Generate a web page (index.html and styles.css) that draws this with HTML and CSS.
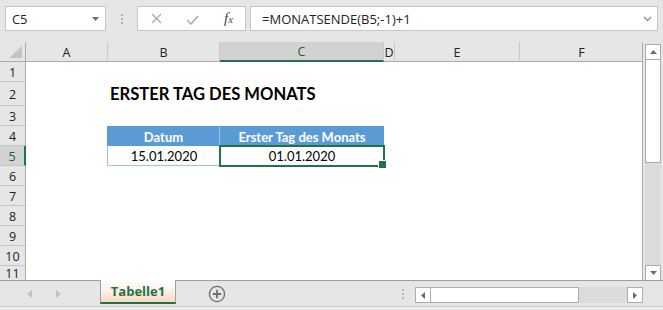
FILE: index.html
```html
<!DOCTYPE html>
<html>
<head>
<meta charset="utf-8">
<link rel="stylesheet" href="styles.css">
</head>
<body>
<div class="app">
  <div class="toolbar">
    <div class="namebox">
      <span class="nb-text">C5</span>
      <svg class="nb-caret" width="7" height="4" viewBox="0 0 7 4"><path d="M0 0h7L3.5 4z" fill="#6d6d6d"/></svg>
    </div>
    <div class="grip"><i></i><i></i><i></i></div>
    <div class="fxbox">
      <svg class="fx-x" width="11" height="11" viewBox="0 0 11 11"><path d="M1 1l9 9M10 1l-9 9" stroke="#a9a9a9" stroke-width="1.3"/></svg>
      <svg class="fx-check" width="13" height="10" viewBox="0 0 13 10"><path d="M1 5l4 4 7-8" stroke="#a9a9a9" stroke-width="1.5" fill="none"/></svg>
      <span class="fx-label">f<span class="fx-sub">x</span></span>
    </div>
    <div class="formula">
      <span class="formula-text">=MONATSENDE(B5;-1)+1</span>
      <svg class="formula-chev" width="9" height="6" viewBox="0 0 9 6"><path d="M1 1l3.5 3.5L8 1" stroke="#8f8f8f" stroke-width="1.4" fill="none"/></svg>
    </div>
  </div>

  <div class="main">
    <div class="grid">
      <div class="corner"><svg width="13" height="12" viewBox="0 0 13 12"><path d="M13 0V12H0z" fill="#c4c4c4"/></svg></div>
      <div class="colhead">A</div>
      <div class="colhead">B</div>
      <div class="colhead sel">C</div>
      <div class="colhead">D</div>
      <div class="colhead">E</div>
      <div class="colhead last">F</div>

      <div class="rowhead r1">1</div>
      <div class="rowhead r2">2</div>
      <div class="rowhead r3">3</div>
      <div class="rowhead r4">4</div>
      <div class="rowhead r5 sel">5</div>
      <div class="rowhead r6">6</div>
      <div class="rowhead r7">7</div>
      <div class="rowhead r8">8</div>
      <div class="rowhead r9">9</div>
      <div class="rowhead r10">10</div>
      <div class="rowhead r11">11</div>

      <div class="title">ERSTER TAG DES MONATS</div>
      <div class="th th-b">Datum</div>
      <div class="th th-c">Erster Tag des Monats</div>
      <div class="td td-b">15.01.2020</div>
      <div class="td td-c">01.01.2020</div>
    </div>
    <div class="vscroll">
      <div class="sbtn"><svg width="7" height="4" viewBox="0 0 7 4"><path d="M0 4h7L3.5 0z" fill="#6b6b6b"/></svg></div>
      <div class="vthumb"></div>
      <div class="vtrack"></div>
      <div class="sbtn"><svg width="7" height="4" viewBox="0 0 7 4"><path d="M0 0h7L3.5 4z" fill="#6b6b6b"/></svg></div>
    </div>
  </div>

  <div class="tabbar">
    <div class="nav">
      <svg width="5" height="8" viewBox="0 0 5 8"><path d="M5 0v8L0 4z" fill="#c3c3c3"/></svg>
      <svg width="5" height="8" viewBox="0 0 5 8"><path d="M0 0v8l5-4z" fill="#c3c3c3"/></svg>
    </div>
    <div class="tab">Tabelle1</div>
    <div class="addsheet">
      <svg width="18" height="18" viewBox="0 0 18 18"><circle cx="9" cy="9" r="7.6" stroke="#707070" stroke-width="1.4" fill="none"/><path d="M9 4.8v8.4M4.8 9h8.4" stroke="#707070" stroke-width="1.8"/></svg>
    </div>
    <div class="spacer"></div>
    <div class="grip2"><i></i><i></i><i></i></div>
    <div class="hscroll">
      <div class="hbtn"><svg width="4" height="7" viewBox="0 0 4 7"><path d="M4 0v7L0 3.5z" fill="#6b6b6b"/></svg></div>
      <div class="hthumb"></div>
      <div class="htrack"></div>
      <div class="hbtn"><svg width="4" height="7" viewBox="0 0 4 7"><path d="M0 0v7l4-3.5z" fill="#6b6b6b"/></svg></div>
    </div>
  </div>
  <div class="status"></div>
</div>
</body>
</html>
```

FILE: styles.css
```css
* { box-sizing: border-box; }
html, body { margin: 0; padding: 0; }
body {
  width: 663px;
  height: 310px;
  overflow: hidden;
  background: #e6e6e6;
  font-family: "Open Sans", "Noto Sans", sans-serif;
}
.app { width: 663px; height: 310px; display: flex; flex-direction: column; }

/* toolbar */
.toolbar {
  height: 42px;
  display: flex;
  align-items: flex-start;
  padding: 6px 0 0 5px;
  flex: none;
}
.namebox {
  width: 101px;
  height: 25px;
  background: #fff;
  border: 1px solid #c6c6c6;
  display: flex;
  align-items: center;
  padding: 0 6px 0 6px;
  justify-content: space-between;
}
.nb-text { font-size: 13px; color: #222; letter-spacing: -0.2px; }
.nb-caret { margin-top: 1px; }
.grip {
  width: 31px;
  height: 25px;
  display: flex;
  flex-direction: column;
  align-items: center;
  justify-content: center;
  gap: 2px;
}
.grip i, .grip2 i { display: block; width: 2px; height: 2px; background: #b5b5b5; }
.fxbox {
  width: 109px;
  height: 25px;
  background: #fff;
  border: 1px solid #c6c6c6;
  display: flex;
  align-items: center;
  padding-left: 13px;
}
.fx-x { margin-right: 24px; }
.fx-check { margin-right: 25px; margin-top: 2px; }
.fx-label {
  font-family: "Liberation Serif", serif;
  font-style: italic;
  font-size: 15px;
  color: #4a4a4a;
  line-height: 1;
}
.fx-sub { font-size: 11px; }
.formula {
  width: 408px;
  height: 25px;
  margin-left: 4px;
  background: #fff;
  border: 1px solid #c6c6c6;
  display: flex;
  align-items: center;
  justify-content: space-between;
  padding: 0 5px 0 11px;
}
.formula-text { font-size: 13px; color: #222; }

/* main area */
.main { height: 238px; display: flex; flex: none; }
.grid {
  width: 643px;
  height: 238px;
  display: grid;
  grid-template-columns: 26px 82px 112px 164px 11px 125px 123px;
  grid-template-rows: 20px 20px 24px repeat(8, 20px) 14px;
  background: #fff;
  border-right: 1px solid #ababab;
  overflow: hidden;
}
.corner {
  background: #e6e6e6;
  border-right: 1px solid #ababab;
  border-bottom: 1px solid #ababab;
  display: flex;
  align-items: flex-end;
  justify-content: flex-end;
  padding: 0 3px 3px 0;
}
.corner svg { display: block; }
.colhead {
  background: #e6e6e6;
  border-right: 1px solid #c9c9c9;
  border-bottom: 1px solid #ababab;
  display: flex;
  align-items: center;
  justify-content: center;
  font-size: 12.5px;
  color: #222;
  padding-top: 1px;
}
.colhead.last { border-right: none; }
.colhead.sel {
  background: #d2d2d2;
  border-bottom: 2px solid #217346;
  color: #1d5f3b;
}
.rowhead {
  grid-column: 1;
  background: #e6e6e6;
  border-right: 1px solid #ababab;
  border-bottom: 1px solid #c5c5c5;
  display: flex;
  align-items: center;
  justify-content: center;
  font-size: 12.5px;
  color: #222;
  padding-top: 1px;
}
.rowhead.sel {
  background: #d2d2d2;
  border-right: 2px solid #217346;
  color: #1d5f3b;
}
.r1 { grid-row: 2; } .r2 { grid-row: 3; } .r3 { grid-row: 4; } .r4 { grid-row: 5; }
.r5 { grid-row: 6; } .r6 { grid-row: 7; } .r7 { grid-row: 8; } .r8 { grid-row: 9; }
.r9 { grid-row: 10; } .r10 { grid-row: 11; }
.r11 { grid-row: 12; align-items: flex-start; padding-top: 0; line-height: 16px; border-bottom: none; }

.title {
  grid-column: 3 / span 3;
  grid-row: 3;
  align-self: end;
  padding: 0 0 2px 2px;
  font-family: Lato, "Open Sans", sans-serif;
  font-weight: 700;
  font-size: 16.6px;
  white-space: nowrap;
  color: #000;
}
.th, .td {
  font-family: Lato, "Open Sans", sans-serif;
  font-size: 13px;
  display: flex;
  align-items: center;
  justify-content: center;
  white-space: nowrap;
  padding-top: 1px;
}
.th {
  grid-row: 5;
  background: #5b9bd5;
  color: #fff;
  font-weight: 700;
}
.th-b { grid-column: 3; border-right: 1px solid #9bc2e6; box-shadow: -1px 0 0 #5b9bd5; }
.th-c { grid-column: 4; }
.td {
  grid-row: 6;
  color: #000;
  border-bottom: 1px solid #9bc2e6;
}
.td-b { grid-column: 3; box-shadow: -1px 0 0 #9bc2e6; }
.td-c { grid-column: 4; position: relative; }
.td-c::after {
  content: "";
  position: absolute;
  left: -1px;
  right: -1px;
  top: -1px;
  bottom: -2px;
  border: 2px solid #217346;
}
.td-c::before {
  content: "";
  position: absolute;
  right: -3px;
  bottom: -4px;
  width: 7px;
  height: 7px;
  background: #217346;
  border: 1px solid #fff;
  z-index: 1;
}

/* vertical scroll */
.vscroll {
  width: 16px;
  margin: 2px 0 0 2px;
  height: 237px;
  display: flex;
  flex-direction: column;
  background: #dcdcdc;
}
.sbtn {
  height: 16px;
  background: #fff;
  border: 1px solid #ababab;
  display: flex;
  align-items: center;
  justify-content: center;
  flex: none;
}
.vthumb {
  height: 103px;
  background: #fff;
  border: 1px solid #ababab;
  border-top: none;
  flex: none;
}
.vtrack { flex: 1; }

/* tab bar */
.tabbar {
  height: 26px;
  border-top: 1px solid #9e9e9e;
  display: flex;
  align-items: flex-start;
  flex: none;
}
.nav {
  width: 100px;
  height: 25px;
  display: flex;
  align-items: center;
  padding-left: 27px;
  gap: 24px;
}
.tab {
  width: 76px;
  height: 24px;
  margin-top: -1px;
  border-left: 1px solid #9e9e9e;
  border-right: 1px solid #9e9e9e;
  border-bottom: 2px solid #217346;
  background: linear-gradient(#ffffff 0%, #fdf0e7 50%, #f8d9c4 100%);
  color: #217346;
  font-weight: 700;
  font-size: 13px;
  display: flex;
  align-items: center;
  justify-content: center;
  padding-bottom: 1px;
}
.addsheet {
  width: 82px;
  height: 25px;
  display: flex;
  align-items: center;
  justify-content: center;
  padding-right: 1px;
}
.spacer { flex: 1; }
.grip2 {
  width: 20px;
  height: 25px;
  display: flex;
  flex-direction: column;
  align-items: center;
  justify-content: center;
  gap: 2px;
  margin-right: 2px;
}
.hscroll {
  width: 228px;
  height: 16px;
  margin: 6px 20px 0 0;
  display: flex;
  background: #dcdcdc;
}
.hbtn {
  width: 16px;
  height: 16px;
  background: #fff;
  border: 1px solid #ababab;
  display: flex;
  align-items: center;
  justify-content: center;
  flex: none;
}
.hthumb {
  width: 148px;
  height: 16px;
  background: #fff;
  border: 1px solid #ababab;
  border-left: none;
  flex: none;
}
.htrack { flex: 1; }
.status {
  flex: 1;
  border-top: 1px solid #c8c8c8;
  background: #ececec;
}
```
